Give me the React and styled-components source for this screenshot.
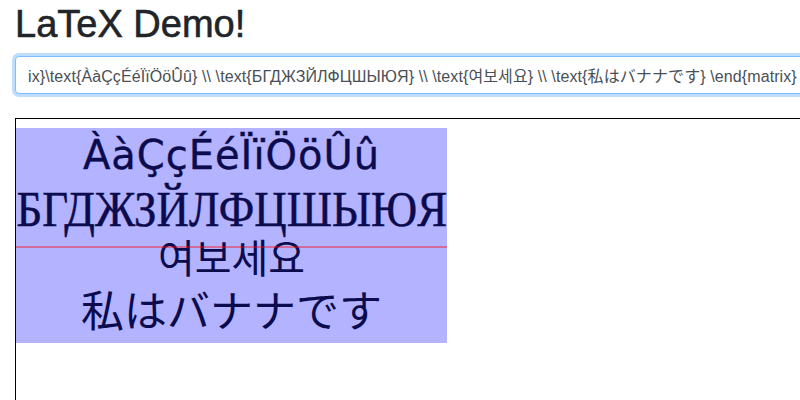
import React, { useLayoutEffect, useRef, useState } from 'react';
import styled, { createGlobalStyle } from 'styled-components';

const SOURCE =
    '\\begin{matrix}\\text{ÀàÇçÉéÏïÖöÛû} \\\\ \\text{БГДЖЗЙЛФЦШЫЮЯ} \\\\ \\text{여보세요} \\\\ \\text{私はバナナです} \\end{matrix}';

const RENDER_WIDTH = 431;

export default () => {
    const inputRef = useRef(null);
    const cyrRef = useRef(null);
    const [cyrScale, setCyrScale] = useState(1);

    useLayoutEffect(() => {
        if (inputRef.current) {
            inputRef.current.scrollLeft = inputRef.current.scrollWidth;
        }
        if (cyrRef.current) {
            const w = cyrRef.current.scrollWidth;
            if (w > RENDER_WIDTH) setCyrScale(RENDER_WIDTH / w);
        }
    }, []);

    return (
        <Page>
            <GlobalStyle />
            <Title>LaTeX Demo!</Title>
            <SourceInput ref={inputRef} value={SOURCE} readOnly spellCheck={false} />
            <Canvas>
                <Rendered>
                    <Row1>ÀàÇçÉéÏïÖöÛû</Row1>
                    <Row2>
                        <Squeeze ref={cyrRef} style={{ transform: `scaleX(${cyrScale})` }}>
                            БГДЖЗЙЛФЦШЫЮЯ
                        </Squeeze>
                    </Row2>
                    <Row3>여보세요</Row3>
                    <Row4>私はバナナです</Row4>
                    <BaseLine />
                </Rendered>
            </Canvas>
        </Page>
    );
};

const GlobalStyle = createGlobalStyle`
    html, body {
        margin: 0;
        padding: 0;
        overflow: hidden;
        background: #fff;
    }
    body {
        font-family: "Liberation Sans", "Noto Sans CJK KR", sans-serif;
        color: #212529;
    }
`;

const Page = styled.div`
    padding: 0 15px;
    width: 840px;
`;

const Title = styled.h1`
    margin: 2px 0 8px;
    font-size: 38px;
    font-weight: 500;
    line-height: 1.2;
    color: #212529;
    -webkit-text-stroke: 0.6px #212529;
`;

const SourceInput = styled.input`
    display: block;
    box-sizing: border-box;
    width: 795px;
    height: 38px;
    padding: 6px 12px;
    font-family: "Liberation Sans", "Noto Sans CJK KR", "Noto Sans CJK JP", sans-serif;
    font-size: 16px;
    letter-spacing: 0.1px;
    color: #495057;
    background: #fff;
    border: 1px solid #80bdff;
    border-radius: 4px;
    outline: 0;
    box-shadow: 0 0 0 3px rgba(0, 123, 255, 0.25);
`;

const Canvas = styled.div`
    margin-top: 24px;
    border: 1px solid #000;
    height: 400px;
    padding-top: 9px;
`;

const Rendered = styled.div`
    position: relative;
    width: ${RENDER_WIDTH}px;
    height: 215px;
    overflow: hidden;
    background: #b3b3ff;
    color: #0b0b4d;
    text-align: center;
    white-space: nowrap;
`;

const Row1 = styled.div`
    padding-top: 3px;
    height: 49px;
    line-height: 49px;
    font-family: "DejaVu Sans", sans-serif;
    font-size: 40px;
    letter-spacing: 1px;
    -webkit-text-stroke: 0.4px #0b0b4d;
`;

const Row2 = styled.div`
    padding-top: 2px;
    height: 54px;
    line-height: 54px;
    font-family: "Liberation Serif", serif;
    font-size: 50px;
    display: flex;
    justify-content: center;
    -webkit-text-stroke: 0.5px #0b0b4d;
`;

const Squeeze = styled.span`
    display: inline-block;
    transform-origin: center;
`;

const Row3 = styled.div`
    height: 40px;
    line-height: 40px;
    font-family: "Noto Sans CJK KR", sans-serif;
    font-size: 40px;
`;

const Row4 = styled.div`
    padding-top: 11px;
    height: 43px;
    line-height: 43px;
    font-family: "Noto Sans CJK JP", sans-serif;
    font-size: 43px;
`;

const BaseLine = styled.div`
    position: absolute;
    left: 0;
    right: 0;
    top: 118px;
    height: 2px;
    background: rgba(255, 0, 0, 0.4);
`;
